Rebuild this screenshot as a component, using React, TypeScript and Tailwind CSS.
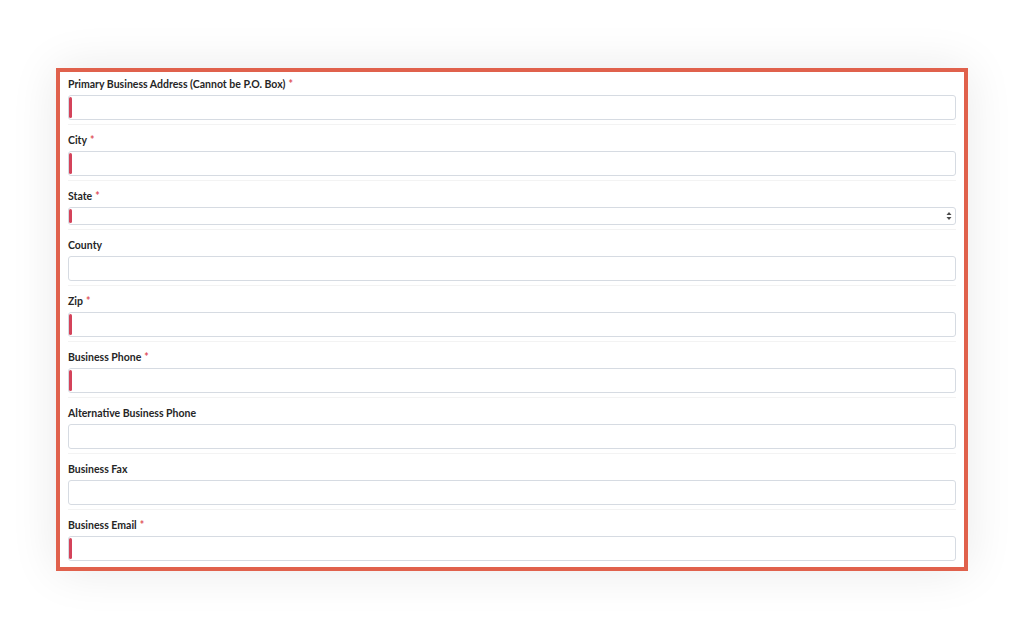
import React from "react";

type Field = { label: string; required?: boolean; select?: boolean };

const fields: Field[] = [
  { label: "Primary Business Address (Cannot be P.O. Box)", required: true },
  { label: "City", required: true },
  { label: "State", required: true, select: true },
  { label: "County" },
  { label: "Zip", required: true },
  { label: "Business Phone", required: true },
  { label: "Alternative Business Phone" },
  { label: "Business Fax" },
  { label: "Business Email", required: true },
];

function SelectArrows() {
  return (
    <svg width="6" height="10" viewBox="0 0 6 10" className="absolute right-[3px] top-1/2 -translate-y-1/2">
      <path d="M0.5 4 L3 1 L5.5 4 Z" fill="#4b4b4b" />
      <path d="M0.5 6 L3 9 L5.5 6 Z" fill="#4b4b4b" />
    </svg>
  );
}

function FormRow({ field, last }: { field: Field; last: boolean }) {
  return (
    <div>
      <label className="block h-[14px] leading-[14px] mb-[4px] text-[10.5px] font-bold text-[#262626]">
        {field.label}
        {field.required && <span className="text-[#e0505a] ml-[3px]">*</span>}
      </label>
      <div
        className={`relative bg-white border border-[#d6dbe2] rounded-[3px] ${field.select ? "h-[18px]" : "h-[25px]"}`}
      >
        {field.required && (
          <div className="absolute left-[0px] top-[1px] bottom-[1px] w-[3px] rounded-[2px] bg-[#d4435a]" />
        )}
        {field.select && <SelectArrows />}
      </div>
      {!last && <div className="mt-[4px] mb-[8px] h-px bg-[#f3f3f3]" />}
    </div>
  );
}

export default function App() {
  return (
    <div
      className="w-[1024px] h-[624px] bg-white pt-[68px] pl-[56px]"
      style={{ fontFamily: "Lato, 'Open Sans', sans-serif" }}
    >
      <div className="w-[912px] h-[503px] border-4 border-[#e0614c] bg-white px-[8px] pt-[5px] shadow-[0_0_45px_rgba(0,0,0,0.09)]">
        {fields.map((f, i) => (
          <FormRow key={f.label} field={f} last={i === fields.length - 1} />
        ))}
      </div>
    </div>
  );
}
